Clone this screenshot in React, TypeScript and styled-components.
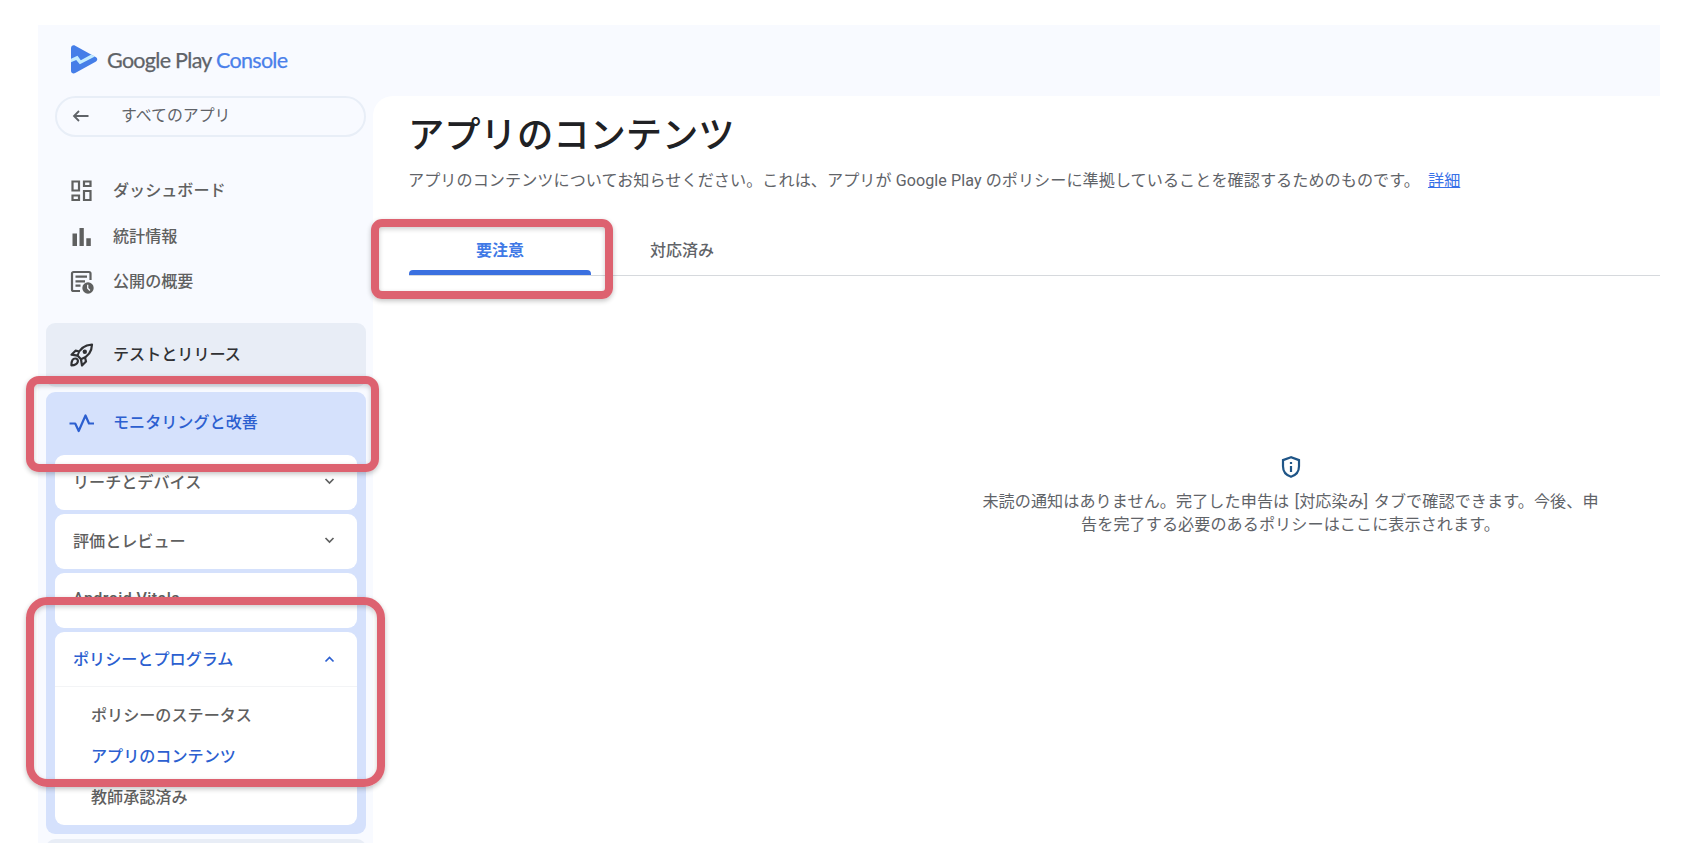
import React from 'react';
import styled, { createGlobalStyle } from 'styled-components';

const GlobalStyle = createGlobalStyle`
  * { box-sizing: border-box; }
  body {
    margin: 0;
    background: #fff;
    font-family: Roboto, "Noto Sans CJK JP", sans-serif;
    color: #5f6368;
  }
`;

const Page = styled.div`
  position: relative;
  width: 1684px;
  height: 868px;
  padding: 25px 24px 25px 38px;
  overflow: hidden;
`;

const Console = styled.div`
  display: flex;
  flex-direction: column;
  width: 1622px;
  height: 818px;
  background: #f8faff;
  overflow: hidden;
`;

const Header = styled.header`
  display: flex;
  align-items: center;
  flex: 0 0 71px;
  padding: 0 0 3px 33px;
  gap: 9px;
`;

const Wordmark = styled.div`
  padding-top: 2px;
  font: 400 21.5px/28px Lato, sans-serif;
  letter-spacing: -0.7px;
  color: #5f6368;
  white-space: nowrap;
  -webkit-text-stroke: 0.25px currentColor;
`;

const WordmarkAccent = styled.span`
  color: #4a80ea;
`;

const Body = styled.div`
  display: flex;
  flex: 1;
  min-height: 0;
`;

const Sidebar = styled.aside`
  flex: 0 0 335px;
  display: flex;
  flex-direction: column;
  padding: 0 7px 0 8px;
`;

const BackButton = styled.button`
  display: flex;
  align-items: center;
  flex: 0 0 41px;
  margin: 0 0 0 9px;
  padding: 0 0 1px 15px;
  gap: 31px;
  border: 2px solid #e8eef7;
  border-radius: 21px;
  background: transparent;
  color: #5f6368;
  font: 400 15.9px/22px Roboto, "Noto Sans CJK JP", sans-serif;
`;

const NavList = styled.nav`
  display: flex;
  flex-direction: column;
  padding: 31px 0 18px;
`;

const NavItem = styled.div<{ $h: number; $color?: string }>`
  display: flex;
  align-items: center;
  height: ${(p) => p.$h}px;
  padding-left: 23px;
  gap: 18px;
  color: ${(p) => p.$color ?? '#5f6060'};
  font-size: 16.1px;
  font-weight: 500;
  svg { flex: 0 0 26px; }
`;

const NavLabel = styled.span`
  padding-bottom: 4px;
`;

const Group = styled.section<{ $active?: boolean }>`
  flex: none;
  margin-bottom: 5px;
  border-radius: 9px;
  background: ${(p) => (p.$active ? '#d5e1fc' : '#e8edf6')};
  padding-bottom: ${(p) => (p.$active ? 9 : 0)}px;
`;

const GroupHead = styled(NavItem)`
  padding-bottom: 2px;
`;

const CardStack = styled.div`
  display: flex;
  flex-direction: column;
  gap: 4px;
  padding: 0 9px;
`;

const Card = styled.div`
  background: #fff;
  border-radius: 9px;
`;

const CardHead = styled.div<{ $open?: boolean; $tracking?: number }>`
  display: flex;
  align-items: center;
  justify-content: space-between;
  height: 55px;
  padding: 0 20px ${(p) => (p.$open ? 2 : 4)}px 18px;
  font-size: 16.1px;
  font-weight: 500;
  letter-spacing: ${(p) => p.$tracking ?? 0}px;
  color: ${(p) => (p.$open ? '#2c5fd0' : '#5f6060')};
  border-bottom: ${(p) => (p.$open ? '1px solid #f3f4f6' : '0')};
`;

const SubList = styled.div`
  display: flex;
  flex-direction: column;
  padding: 8px 0 7px 36px;
`;

const SubItem = styled.div<{ $current?: boolean }>`
  height: 41px;
  line-height: 41px;
  font-size: 16.1px;
  font-weight: 500;
  color: ${(p) => (p.$current ? '#2c5fd0' : '#5f6060')};
`;

const Main = styled.main`
  flex: 1;
  min-width: 0;
  display: flex;
  flex-direction: column;
  background: #fff;
  border-top-left-radius: 20px;
  padding: 13px 0 0 36px;
`;

const Title = styled.h1`
  margin: 0 0 0 -1px;
  font-size: 36.3px;
  line-height: 54px;
  font-weight: 500;
  color: #202124;
`;

const Description = styled.p`
  margin: 6px 0 0 -1px;
  font-size: 16.1px;
  line-height: 24px;
  letter-spacing: 0.07px;
  color: #5f6368;
  white-space: nowrap;
`;

const MoreLink = styled.a`
  margin-left: 8px;
  color: #3871e8;
  text-decoration: underline;
`;

const Tabs = styled.div`
  display: flex;
  margin-top: 32px;
  height: 51px;
  flex: none;
  border-bottom: 1px solid #d6d9dd;
`;

const Tab = styled.div<{ $selected?: boolean }>`
  display: flex;
  flex-direction: column;
  justify-content: space-between;
  align-items: center;
  width: 182px;
  padding-top: 13px;
  font-size: 16px;
  line-height: 26px;
  font-weight: ${(p) => (p.$selected ? 700 : 500)};
  color: ${(p) => (p.$selected ? '#4079e6' : '#5f6368')};
`;

const TabBar = styled.span`
  width: 100%;
  height: 5px;
  border-radius: 4px 4px 0 0;
  background: #3b70e0;
`;

const Empty = styled.div`
  display: flex;
  flex-direction: column;
  align-items: center;
  margin-top: 179px;
  padding-left: 512px;
  gap: 11px;
  text-align: center;
  font-size: 16.1px;
  line-height: 23px;
  letter-spacing: 0.08px;
  word-spacing: 1.5px;
  color: #5f6368;
  white-space: nowrap;
`;

/* Highlight frames laid over the console */
const Marker = styled.div<{ $x: number; $y: number; $w: number; $h: number; $r: number }>`
  position: absolute;
  left: ${(p) => p.$x}px;
  top: ${(p) => p.$y}px;
  width: ${(p) => p.$w}px;
  height: ${(p) => p.$h}px;
  border: 8px solid #dd6270;
  border-radius: ${(p) => p.$r}px;
  box-shadow: 0 2px 5px rgba(0, 0, 0, 0.24), inset 0 2px 5px rgba(0, 0, 0, 0.2);
`;

const Logo = () => (
  <svg width="27" height="29" viewBox="0 0 27 29">
    <path d="M0 3.2C0 .8 2.2-.4 4.200.8L24.600 11.900c2.200 1.200 2.200 3.700 0 4.900L4.200 28.100C2.200 29.200 0 28 0 25.700z" fill="#457ee8" />
    <path d="M0 13.800L6.500 10.800l3.300 4.400 10.500-5.700 3.600 2L8.800 19.200l-3.600-4.300L0 17.300z" fill="#c4ecff" />
  </svg>
);

const ArrowLeft = () => (
  <svg width="18" height="14" viewBox="0 0 18 14" fill="none" stroke="currentColor" strokeWidth="1.800">
    <path d="M16.500 7H2M7 2L2 7l5 5" />
  </svg>
);

const DashboardIcon = () => (
  <svg width="26" height="26" viewBox="0 0 26 26" fill="none" stroke="currentColor" strokeWidth="2.200">
    <path d="M3.500 3.500h6.500v9H3.500zM15 3.500h6.500V8H15zM15 13h6.500v9H15zM3.500 17.500H10V22H3.500z" />
  </svg>
);

const StatsIcon = () => (
  <svg width="26" height="26" viewBox="0 0 26 26" fill="currentColor">
    <path d="M3.500 9.500H8V22H3.500zM10.500 4h4.300v18h-4.300zM17.300 14.300h4.500V22h-4.500z" />
  </svg>
);

const PublishIcon = () => (
  <svg width="26" height="26" viewBox="0 0 26 26" fill="none" stroke="currentColor" strokeWidth="2.200">
    <path d="M21.500 11V4.500a1.500 1.500 0 0 0-1.500-1.500H4.500A1.500 1.500 0 0 0 3 4.500v16A1.500 1.500 0 0 0 4.500 22H11" />
    <path d="M6.500 7.700h11.500M6.500 12.300h9.500M6.500 16.700h5" />
    <circle cx="19" cy="19" r="5.700" fill="currentColor" stroke="none" />
    <path d="M18.700 15.800v3.500l2.200 2.200" stroke="#f8faff" strokeWidth="1.300" />
  </svg>
);

const RocketIcon = () => (
  <svg width="26" height="26" viewBox="0 0 26 26" fill="none" stroke="currentColor" strokeWidth="2.200" strokeLinejoin="round">
    <path d="M8.500 13.500C10.500 7 15.500 3 23 2.500c-.2 7.500-4.500 12.500-11 14.800z" />
    <path d="M10.500 9.500L6.500 8.700 2.500 12.700l6 1M16 15.500l1 4-4 4-1-6" />
    <path d="M2.400 23.300c0-3 .4-6.800 3.800-6.800 4.300 0 3.800 6.500-3.800 6.800z" />
    <circle cx="15.800" cy="9.700" r="2.200" fill="currentColor" stroke="none" />
  </svg>
);

const PulseIcon = () => (
  <svg width="26" height="26" viewBox="0 0 26 26" fill="none" stroke="currentColor" strokeWidth="2.200" strokeLinejoin="round">
    <path d="M.5 13.500h5.700l3.500 7.500 6.800-15.500 3.500 8h5" />
  </svg>
);

const Chevron = ({ up }: { up?: boolean }) => (
  <svg width="15" height="15" viewBox="0 0 15 15" fill="none" stroke="currentColor" strokeWidth="1.700">
    <path d={up ? 'M3.500 10.500l4-4 4 4' : 'M3.500 6l4 4 4-4'} />
  </svg>
);

const ShieldIcon = () => (
  <svg width="20" height="24" viewBox="0 0 20 24" fill="none" stroke="#1f5587" strokeWidth="2.200">
    <path d="M10 2.200L2 5.100v6.200c0 5 3.300 9 8 10.500 4.700-1.500 8-5.500 8-10.500V5.100z" />
    <path d="M10 11v6M10 7v2" />
  </svg>
);

export default function App() {
  return (
    <>
      <GlobalStyle />
      <Page>
        <Console>
          <Header>
            <Logo />
            <Wordmark>
              Google Play <WordmarkAccent>Console</WordmarkAccent>
            </Wordmark>
          </Header>
          <Body>
            <Sidebar>
              <BackButton>
                <ArrowLeft />
                すべてのアプリ
              </BackButton>
              <NavList>
                <NavItem $h={46}><DashboardIcon /><NavLabel>ダッシュボード</NavLabel></NavItem>
                <NavItem $h={45}><StatsIcon /><NavLabel>統計情報</NavLabel></NavItem>
                <NavItem $h={46}><PublishIcon /><NavLabel>公開の概要</NavLabel></NavItem>
              </NavList>
              <Group>
                <NavItem $h={64} $color="#303134"><RocketIcon /><NavLabel>テストとリリース</NavLabel></NavItem>
              </Group>
              <Group $active>
                <GroupHead $h={63} $color="#2c5fd0"><PulseIcon /><NavLabel>モニタリングと改善</NavLabel></GroupHead>
                <CardStack>
                  <Card><CardHead>リーチとデバイス<Chevron /></CardHead></Card>
                  <Card><CardHead>評価とレビュー<Chevron /></CardHead></Card>
                  <Card><CardHead $tracking={0.4}>Android Vitals</CardHead></Card>
                  <Card>
                    <CardHead $open>ポリシーとプログラム<Chevron up /></CardHead>
                    <SubList>
                      <SubItem>ポリシーのステータス</SubItem>
                      <SubItem $current>アプリのコンテンツ</SubItem>
                      <SubItem>教師承認済み</SubItem>
                    </SubList>
                  </Card>
                </CardStack>
              </Group>
              <Group><NavItem $h={64} /></Group>
            </Sidebar>
            <Main>
              <Title>アプリのコンテンツ</Title>
              <Description>
                アプリのコンテンツについてお知らせください。これは、アプリが Google Play のポリシーに準拠していることを確認するためのものです。
                <MoreLink>詳細</MoreLink>
              </Description>
              <Tabs>
                <Tab $selected>要注意<TabBar /></Tab>
                <Tab>対応済み</Tab>
              </Tabs>
              <Empty>
                <ShieldIcon />
                <div>
                  未読の通知はありません。完了した申告は [対応染み] タブで確認できます。今後、申<br />
                  告を完了する必要のあるポリシーはここに表示されます。
                </div>
              </Empty>
            </Main>
          </Body>
        </Console>
        <Marker $x={371} $y={219} $w={242} $h={80} $r={11} />
        <Marker $x={26} $y={376} $w={353} $h={96} $r={13} />
        <Marker $x={26} $y={597} $w={359} $h={190} $r={21} />
      </Page>
    </>
  );
}
